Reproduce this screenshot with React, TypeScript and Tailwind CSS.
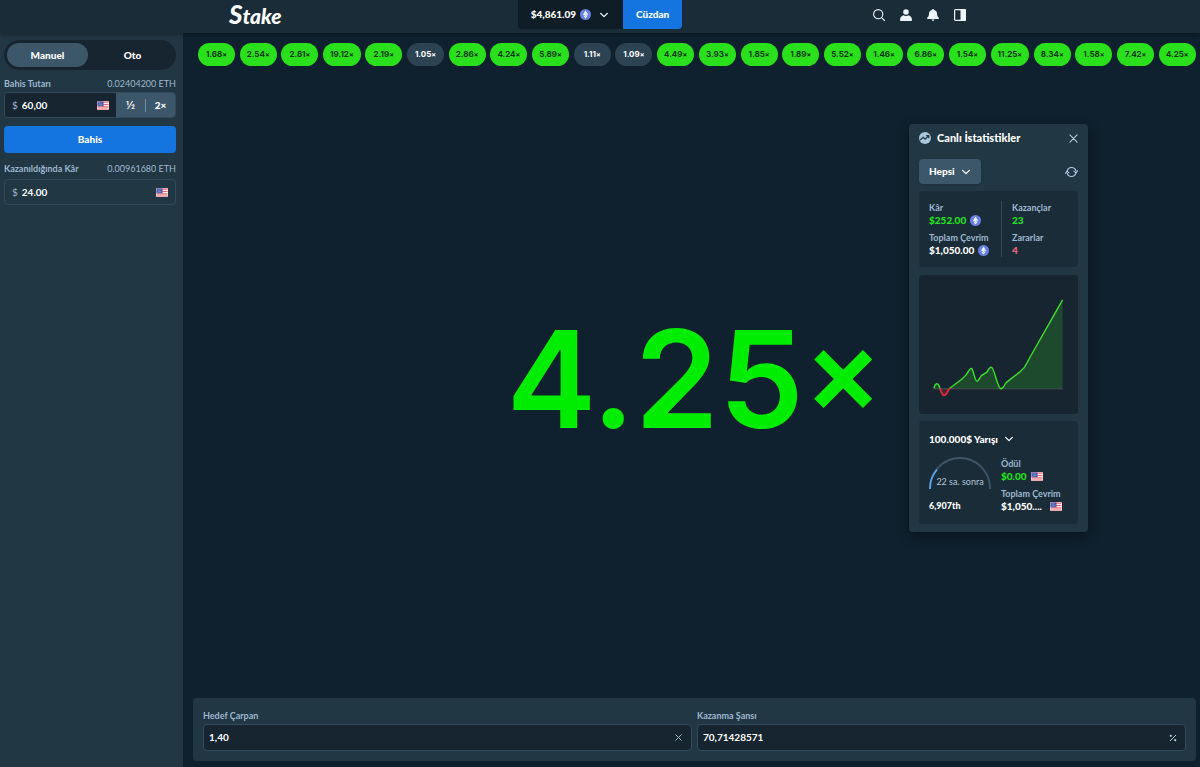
import { useState } from 'react';
import type { ReactNode } from 'react';
import clsx from 'clsx';

const results = [
  '1.68', '2.54', '2.81', '19.12', '2.19', '1.05', '2.86', '4.24',
  '5.89', '1.11', '1.09', '4.49', '3.93', '1.85', '1.89', '5.52',
  '1.46', '6.86', '1.54', '11.25', '8.34', '1.58', '7.42', '4.25',
];

const TARGET = 1.4;

function EthIcon() {
  return (
    <svg viewBox="0 0 24 24" className="size-[11px] shrink-0" aria-hidden="true">
      <circle cx="12" cy="12" r="12" fill="#6780e3" />
      <path d="M12 3.5 6.8 12.2 12 15.2l5.2-3z" fill="#fff" />
      <path d="M12 3.5v11.7l5.2-3z" fill="#d5dcf8" />
      <path d="M6.8 13.4 12 20.5l5.2-7.1-5.2 3z" fill="#fff" />
    </svg>
  );
}

function UsFlag() {
  return (
    <svg viewBox="0 0 24 18" className="h-[9px] w-3 shrink-0" aria-hidden="true">
      <rect width="24" height="18" rx="2" fill="#f7eef0" />
      <path d="M1 1h22v2.4H1zM1 5.8h22v2.4H1zM1 10.6h22V13H1zM1 15.2h22V17H1z" fill="#e9636f" />
      <path d="M1 1h12v9.5H1z" fill="#3c4da8" />
      <path d="M3 3h2v1.5H3zM7 3h2v1.5H7zM5 5.3h2v1.5H5zM9 5.3h2v1.5H9zM3 7.6h2v1.5H3zM7 7.6h2v1.5H7z" fill="#c9cff0" />
    </svg>
  );
}

function Chevron() {
  return (
    <svg viewBox="0 0 12 12" className="size-[10px] shrink-0" fill="none" stroke="currentColor" strokeWidth="1.5" strokeLinecap="round" strokeLinejoin="round" aria-hidden="true">
      <path d="m2 4 4 4 4-4" />
    </svg>
  );
}

function Cross({ className }: { className: string }) {
  return (
    <svg viewBox="0 0 10 10" className={className} fill="none" stroke="currentColor" strokeWidth="1.2" strokeLinecap="round" aria-hidden="true">
      <path d="m1 1 8 8M9 1 1 9" />
    </svg>
  );
}

function Header() {
  return (
    <header className="relative z-10 h-[33px] bg-[#1a2c38] shadow-[0_2px_4px_rgba(0,0,0,0.3)]">
      <div className="mx-auto grid h-full max-w-[742px] grid-cols-[1fr_auto_1fr] items-start">
        <a href="#home" className="block h-[29px] text-[21px] leading-[29px] font-black whitespace-nowrap text-white italic">
          <span className="text-[26px]">S</span>take
        </a>
        <div className="flex h-[29px] overflow-hidden rounded-b-[4px]">
          <button type="button" className="flex items-center gap-1 bg-[#0f1d27] pr-[14px] pl-[13px] text-[10px] font-black text-white">
            $4,861.09
            <EthIcon />
            <span className="ml-1 flex"><Chevron /></span>
          </button>
          <button type="button" className="bg-[#1475e1] px-[13px] text-[10px] font-black text-white">Cüzdan</button>
        </div>
        <nav className="flex h-[29px] items-center justify-end gap-[15px] pr-[5px] text-[#eef4fb]">
          <button type="button" aria-label="Ara">
            <svg viewBox="0 0 12 12" className="size-3" fill="none" stroke="currentColor" strokeWidth="1.1" strokeLinecap="round">
              <circle cx="5.2" cy="5.2" r="4.6" />
              <path d="m8.6 8.6 2.9 2.9" />
            </svg>
          </button>
          <button type="button" aria-label="Profil">
            <svg viewBox="0 0 12 12" className="size-3" fill="currentColor">
              <circle cx="6" cy="3" r="2.8" />
              <path d="M3.400 6.300c.7.500 1.600.8 2.600.8s1.900-.3 2.600-.8C10.700 6.900 12 8.700 12 11a.9.9 0 0 1-.9.9H.9A.9.9 0 0 1 0 11c0-2.300 1.300-4.100 3.400-4.700z" />
            </svg>
          </button>
          <button type="button" aria-label="Bildirimler">
            <svg viewBox="0 0 12 12" className="size-3" fill="currentColor">
              <path d="M6 0c.6 0 1 .4 1 .9 1.800.4 3 1.800 3 3.600 0 2.400.8 3.500 1.800 4.200V10H.2V8.700C1.200 8 2 6.900 2 4.500 2 2.700 3.200 1.300 5 .9 5 .4 5.400 0 6 0zM4.600 10.600h2.800C7.300 11.400 6.700 12 6 12s-1.300-.6-1.400-1.400z" />
            </svg>
          </button>
          <button type="button" aria-label="Kenar çubuğu">
            <svg viewBox="0 0 12 12" className="size-3">
              <rect x="0.600" y="0.600" width="10.800" height="10.800" rx="1" fill="none" stroke="currentColor" strokeWidth="1.200" />
              <path d="M6.500 0H11a1 1 0 0 1 1 1v10a1 1 0 0 1-1 1H6.500z" fill="currentColor" />
            </svg>
          </button>
        </nav>
      </div>
    </header>
  );
}

function FieldHead({ id, label, amount }: { id: string; label: string; amount: string }) {
  return (
    <div className="flex h-4 items-center justify-between text-[9px] text-[#9db8d2]">
      <label htmlFor={id} className="font-bold">{label}</label>
      <span>{amount}</span>
    </div>
  );
}

function Sidebar() {
  const [mode, setMode] = useState('Manuel');
  return (
    <aside className="w-[183px] shrink-0 bg-[#213743] pt-[7px] pr-[7px] pl-1">
      <div className="flex h-[30px] gap-1 rounded-full bg-[#172530] p-[3px]">
        {['Manuel', 'Oto'].map((name) => (
          <button
            key={name}
            type="button"
            onClick={() => setMode(name)}
            className={clsx('flex-1 rounded-full text-[10px] font-black text-white', mode === name && 'bg-[#3d576a]')}
          >
            {name}
          </button>
        ))}
      </div>
      <div className="pt-[6px]">
        <FieldHead id="bet" label="Bahis Tutarı" amount="0.02404200 ETH" />
        <div className="flex h-[26px] overflow-hidden rounded-[4px] border border-[#304b5c]">
          <div className="flex min-w-0 flex-1 items-center gap-1 bg-[#172530] px-[7px] text-[10px]">
            <span className="text-[#9db8d2]">$</span>
            <input id="bet" defaultValue="60,00" className="w-0 min-w-0 flex-1 font-bold text-white outline-none" />
            <UsFlag />
          </div>
          <div className="flex w-[59px] items-center bg-[#3d576a] text-[10px] font-black text-white">
            <button type="button" className="flex-1 font-['Inter',sans-serif] font-bold">½</button>
            <span className="h-[13px] w-px bg-[#7090a8]" />
            <button type="button" className="flex-1">2×</button>
          </div>
        </div>
      </div>
      <button type="button" className="mt-2 h-[27px] w-full rounded-[4px] bg-[#1475e1] text-[10px] font-black text-white">Bahis</button>
      <div className="pt-2">
        <FieldHead id="profit" label="Kazanıldığında Kâr" amount="0.00961680 ETH" />
        <div className="mt-[2px] flex h-[26px] items-center gap-1 rounded-[4px] border border-[#304b5c] px-[7px] text-[10px]">
          <span className="text-[#9db8d2]">$</span>
          <input id="profit" readOnly value="24.00" className="w-0 min-w-0 flex-1 font-bold text-white outline-none" />
          <UsFlag />
        </div>
      </div>
    </aside>
  );
}

function Stat({ label, tone, children }: { label: string; tone: string; children: ReactNode }) {
  return (
    <div className="whitespace-nowrap">
      <dt className="text-[9px] leading-[13px] font-bold text-[#9db8d2]">{label}</dt>
      <dd className={clsx('flex items-center gap-1 text-[10px] leading-[13px] font-black', tone)}>{children}</dd>
    </div>
  );
}

const curve =
  'M15 114C16 109 19 107 21 114C24 123 26 123 29 117Q30 115 31 114L43 105L47 101C49 99 51 93 53 94C55 96 56 107 58.500 107C60 107 61 103 63 101L68 98C69 97 71 92 73 93C76 94 79 114.500 82.500 114.500C85 114.500 86 110 88 108L101 98L106 93Q108 90 111 84L144.500 25';

function ProfitChart() {
  return (
    <div className="rounded-[4px] bg-[#172530]">
      <svg viewBox="0 0 160 140" className="block w-full" role="img" aria-label="Kâr grafiği">
        <defs>
          <clipPath id="above"><rect width="160" height="114" /></clipPath>
          <clipPath id="below"><rect y="114" width="80" height="25" /></clipPath>
        </defs>
        <path d={`${curve}V114.500H15Z`} fill="#1d4a2d" clipPath="url(#above)" />
        <path d={`${curve}V114.500H15Z`} fill="#4b2035" clipPath="url(#below)" />
        <path d="M15 114.500H144.500" stroke="#3d5a50" />
        <path d={curve} fill="none" stroke="#3fe02d" strokeWidth="1.400" />
        <path d={curve} fill="none" stroke="#e01f3d" strokeWidth="1.800" clipPath="url(#below)" />
      </svg>
    </div>
  );
}

function LiveStats() {
  return (
    <section className="absolute top-[91px] right-28 w-[179px] rounded-[4px] bg-[#213743] px-[10px] pb-2 shadow-[0_4px_12px_rgba(0,0,0,0.4)]">
      <div className="flex h-7 items-center gap-[6px]">
        <svg viewBox="0 0 12 12" className="size-3 shrink-0" aria-hidden="true">
          <circle cx="6" cy="6" r="6" fill="#a9c8e0" />
          <path d="m1.200 8 3-2.600 2 1.700 3.400-3.200M7.200 3.700h2.600v2.600" fill="none" stroke="#213743" strokeWidth="1.200" />
        </svg>
        <h2 className="flex-1 text-[11px] font-black whitespace-nowrap text-white">Canlı İstatistikler</h2>
        <button type="button" aria-label="Kapat" className="text-[#b5cbe0]"><Cross className="size-[9px]" /></button>
      </div>
      <div className="mt-[7px] flex items-center justify-between">
        <button type="button" className="flex h-[25px] items-center gap-[6px] rounded-[4px] bg-[#3d576a] px-[10px] text-[10px] font-black text-white shadow-sm">
          Hepsi
          <Chevron />
        </button>
        <button type="button" aria-label="Sıfırla" className="text-[#b5cbe0]">
          <svg viewBox="0 0 13 12" className="h-3 w-[13px]" fill="none" stroke="currentColor" strokeWidth="1.100" strokeLinecap="round" strokeLinejoin="round">
            <path d="M2.200 4.800a4.500 4.500 0 0 1 8.700 0M10.800 7.200a4.500 4.500 0 0 1-8.700 0" />
            <path d="m9 5.200 2 1.700 1.500-2.200M.5 7.300l1.500-2.200L4 6.800" />
          </svg>
        </button>
      </div>
      <div className="mt-[7px] flex rounded-[4px] bg-[#1a2c38] pt-[10px] pr-2 pb-[10px] pl-[10px]">
        <dl className="flex w-[72px] flex-col gap-1">
          <Stat label="Kâr" tone="text-[#1fe31a]">$252.00<EthIcon /></Stat>
          <Stat label="Toplam Çevrim" tone="text-white">$1,050.00<EthIcon /></Stat>
        </dl>
        <dl className="flex flex-1 flex-col gap-1 border-l border-[#304b5c] pl-[10px]">
          <Stat label="Kazançlar" tone="text-[#1fe31a]">23</Stat>
          <Stat label="Zararlar" tone="text-[#f0647c]">4</Stat>
        </dl>
      </div>
      <div className="mt-2"><ProfitChart /></div>
      <div className="mt-[7px] rounded-[4px] bg-[#1a2c38] px-[10px] py-[11px]">
        <button type="button" className="flex h-[14px] items-center gap-[6px] text-[10px] font-black text-white">
          100.000$ Yarışı
          <Chevron />
        </button>
        <div className="mt-[11px] flex gap-[10px]">
          <div className="flex w-[62px] shrink-0 flex-col justify-between">
            <div className="relative">
              <svg viewBox="0 0 62 32" className="block w-full" fill="none" strokeWidth="1.800" aria-hidden="true">
                <path d="M1 32v-1a30 30 0 0 1 60 0v1" stroke="#3d576a" />
                <path d="M1 32v-1c0-6.500 2.500-13 7-18.500" stroke="#5aa6f0" />
              </svg>
              <span className="absolute inset-x-0 bottom-px text-center text-[9px] leading-3 whitespace-nowrap text-[#b1c6da]">22 sa. sonra</span>
            </div>
            <span className="text-[9px] leading-[14px] font-black text-white">6,907th</span>
          </div>
          <dl className="flex flex-col gap-1">
            <Stat label="Ödül" tone="text-[#1fe31a]">$0.00<UsFlag /></Stat>
            <Stat label="Toplam Çevrim" tone="text-white">$1,050....<span className="ml-1 flex"><UsFlag /></span></Stat>
          </dl>
        </div>
      </div>
    </section>
  );
}

function SettingField({ id, label, value, children }: { id: string; label: string; value: string; children: ReactNode }) {
  return (
    <div className="flex-1">
      <label htmlFor={id} className="flex h-[17px] items-center text-[9px] font-bold text-[#9db8d2]">{label}</label>
      <div className="flex h-[27px] items-center rounded-[4px] border border-[#304b5c] bg-[#172530] pr-2 pl-[5px]">
        <input id={id} defaultValue={value} className="min-w-0 flex-1 text-[10px] font-bold text-white outline-none" />
        {children}
      </div>
    </div>
  );
}

export default function App() {
  return (
    <div className="flex min-h-screen flex-col bg-[#0f212e] font-['Lato','Noto_Sans',sans-serif]">
      <Header />
      <div className="flex flex-1">
        <Sidebar />
        <main className="relative flex min-w-0 flex-1 flex-col pt-[10px] pr-1 pb-[6px] pl-[10px]">
          <ul className="flex justify-between overflow-hidden pl-[5px]">
            {results.map((value, index) => (
              <li key={index} className="flex">
                <button
                  type="button"
                  className={clsx(
                    "h-[23px] min-w-[37px] rounded-full px-[7px] font-['Inter',sans-serif] text-[8px] font-bold",
                    Number(value) >= TARGET ? 'bg-[#2ae01c] text-[#0b3512]' : 'bg-[#2b4353] text-white',
                  )}
                >
                  {value}<span className="text-[7px]">×</span>
                </button>
              </li>
            ))}
          </ul>
          <output className="flex flex-1 items-center justify-center pb-[6px] font-['Inter',sans-serif] text-[135px] leading-none font-semibold text-[#00ec00]">
            4.25<span className="text-[117px] [font-feature-settings:'case']">×</span>
          </output>
          <div className="flex gap-[5px] rounded-[4px] bg-[#213743] px-[10px] pt-[9px] pb-[10px]">
            <SettingField id="target" label="Hedef Çarpan" value="1,40">
              <button type="button" aria-label="Temizle" className="px-px text-[#b5cbe0]"><Cross className="size-[7px]" /></button>
            </SettingField>
            <SettingField id="chance" label="Kazanma Şansı" value="70,71428571">
              <svg viewBox="0 0 8 8" className="size-2 text-[#b5cbe0]" fill="currentColor" aria-hidden="true">
                <path d="m1 7 6-6" stroke="currentColor" strokeWidth="1" />
                <circle cx="1.800" cy="1.800" r="1.100" />
                <circle cx="6.200" cy="6.200" r="1.100" />
              </svg>
            </SettingField>
          </div>
          <LiveStats />
        </main>
      </div>
    </div>
  );
}
